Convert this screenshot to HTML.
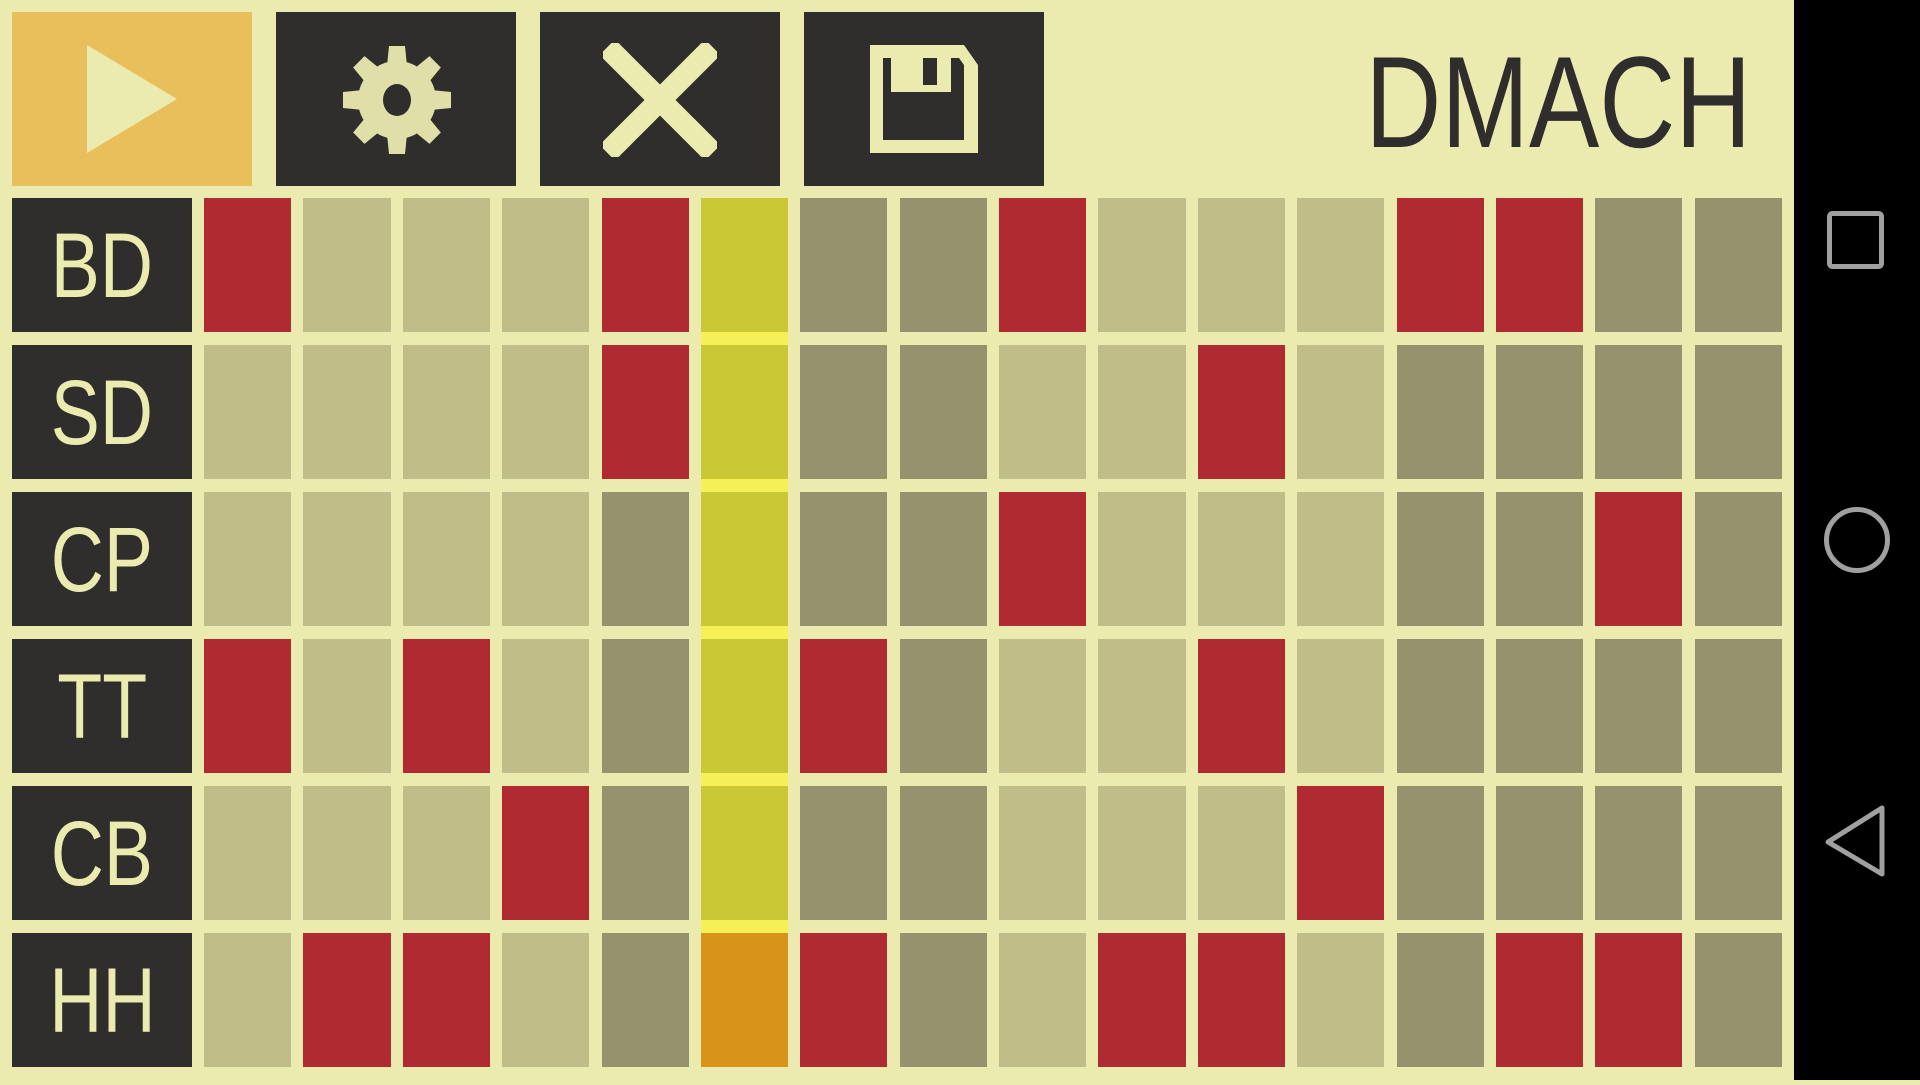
<!DOCTYPE html>
<html><head><meta charset="utf-8"><style>
html,body{margin:0;padding:0;width:1920px;height:1080px;overflow:hidden;background:#ebebb0;font-family:"Liberation Sans",sans-serif;}
.a{position:absolute}
.btn{position:absolute;top:12px;width:240px;height:174px;background:#302e2c}
.lab{position:absolute;left:12px;width:180px;height:134px;background:#302e2c;color:#ebebb0;font-size:92px;line-height:136px;text-align:center}
.lab span{display:inline-block;transform:scaleX(0.8);}
#grid{position:absolute;left:204px;top:198px;display:grid;grid-template-columns:repeat(16,87.2px);column-gap:12.2px;grid-template-rows:repeat(6,134px);row-gap:13px}
.L{background:#c1bd88}.D{background:#96926e}.R{background:#af2a31}.P{background:#cbc836}.O{background:#d8941a}
.ystrip{position:absolute;left:701px;width:87px;height:13px;background:#f5f055}
#nav{position:absolute;left:1794px;top:0;width:126px;height:1080px;background:#000}
</style></head><body>
<div class="btn" style="left:12px;background:#e9bf5c"><svg class="a" style="left:75px;top:33px" width="92" height="110"><polygon points="0,0 90,54 0,108" fill="#ebebb0"/></svg></div>
<div class="btn" style="left:276px"><svg class="a" style="left:66px;top:33px" width="110" height="110" viewBox="-55 -55 110 110">
<g fill="#e0dfa8">
<circle r="39"/>
<g id="t"><polygon points="-8,-54 8,-54 10,-34 -10,-34"/></g>
<use href="#t" transform="rotate(45)"/><use href="#t" transform="rotate(90)"/><use href="#t" transform="rotate(135)"/><use href="#t" transform="rotate(180)"/><use href="#t" transform="rotate(225)"/><use href="#t" transform="rotate(270)"/><use href="#t" transform="rotate(315)"/>
</g><ellipse rx="14" ry="16" fill="#302e2c"/></svg></div>
<div class="btn" style="left:540px"><svg class="a" style="left:63px;top:31px" width="114" height="114" viewBox="0 0 114 114"><g stroke="#ebebb0" stroke-width="22" stroke-linecap="square"><line x1="12" y1="12" x2="102" y2="102"/><line x1="102" y1="12" x2="12" y2="102"/></g></svg></div>
<div class="btn" style="left:804px"><svg class="a" style="left:66px;top:33px" width="110" height="110" viewBox="0 0 110 110">
<path d="M0,0 H94 L108,20 V108 H0 Z M13,13 V95 H94 V20 L89,13 Z" fill="#ebebb0" fill-rule="evenodd"/>
<rect x="21" y="13" width="60" height="34" fill="#ebebb0"/><rect x="53" y="13" width="14" height="27" fill="#302e2c"/></svg></div>
<div class="a" style="left:1320px;top:32px;width:400px;font-size:130px;line-height:140px;color:#302e2c;text-align:center"><span style="display:inline-block;transform:scaleX(0.81)">DMACH</span></div>

<div class="lab" style="top:198px"><span>BD</span></div>
<div class="lab" style="top:345px"><span>SD</span></div>
<div class="lab" style="top:492px"><span>CP</span></div>
<div class="lab" style="top:639px"><span>TT</span></div>
<div class="lab" style="top:786px"><span>CB</span></div>
<div class="lab" style="top:933px"><span>HH</span></div>

<div class="ystrip" style="top:332px"></div>
<div class="ystrip" style="top:479px"></div>
<div class="ystrip" style="top:626px"></div>
<div class="ystrip" style="top:773px"></div>
<div class="ystrip" style="top:920px"></div>

<div id="grid">
<div class="R"></div><div class="L"></div><div class="L"></div><div class="L"></div><div class="R"></div><div class="P"></div><div class="D"></div><div class="D"></div><div class="R"></div><div class="L"></div><div class="L"></div><div class="L"></div><div class="R"></div><div class="R"></div><div class="D"></div><div class="D"></div>
<div class="L"></div><div class="L"></div><div class="L"></div><div class="L"></div><div class="R"></div><div class="P"></div><div class="D"></div><div class="D"></div><div class="L"></div><div class="L"></div><div class="R"></div><div class="L"></div><div class="D"></div><div class="D"></div><div class="D"></div><div class="D"></div>
<div class="L"></div><div class="L"></div><div class="L"></div><div class="L"></div><div class="D"></div><div class="P"></div><div class="D"></div><div class="D"></div><div class="R"></div><div class="L"></div><div class="L"></div><div class="L"></div><div class="D"></div><div class="D"></div><div class="R"></div><div class="D"></div>
<div class="R"></div><div class="L"></div><div class="R"></div><div class="L"></div><div class="D"></div><div class="P"></div><div class="R"></div><div class="D"></div><div class="L"></div><div class="L"></div><div class="R"></div><div class="L"></div><div class="D"></div><div class="D"></div><div class="D"></div><div class="D"></div>
<div class="L"></div><div class="L"></div><div class="L"></div><div class="R"></div><div class="D"></div><div class="P"></div><div class="D"></div><div class="D"></div><div class="L"></div><div class="L"></div><div class="L"></div><div class="R"></div><div class="D"></div><div class="D"></div><div class="D"></div><div class="D"></div>
<div class="L"></div><div class="R"></div><div class="R"></div><div class="L"></div><div class="D"></div><div class="O"></div><div class="R"></div><div class="D"></div><div class="L"></div><div class="R"></div><div class="R"></div><div class="L"></div><div class="D"></div><div class="R"></div><div class="R"></div><div class="D"></div>
</div>

<div id="nav"><svg width="126" height="1080">
<g fill="none" stroke="#a0a0a0" stroke-width="5" stroke-linejoin="round">
<rect x="35.5" y="213.5" width="52" height="53" rx="3"/>
<circle cx="63" cy="540" r="30.5"/>
<path d="M88,808 L88,874 L34,842 Z"/>
</g></svg></div>
</body></html>
